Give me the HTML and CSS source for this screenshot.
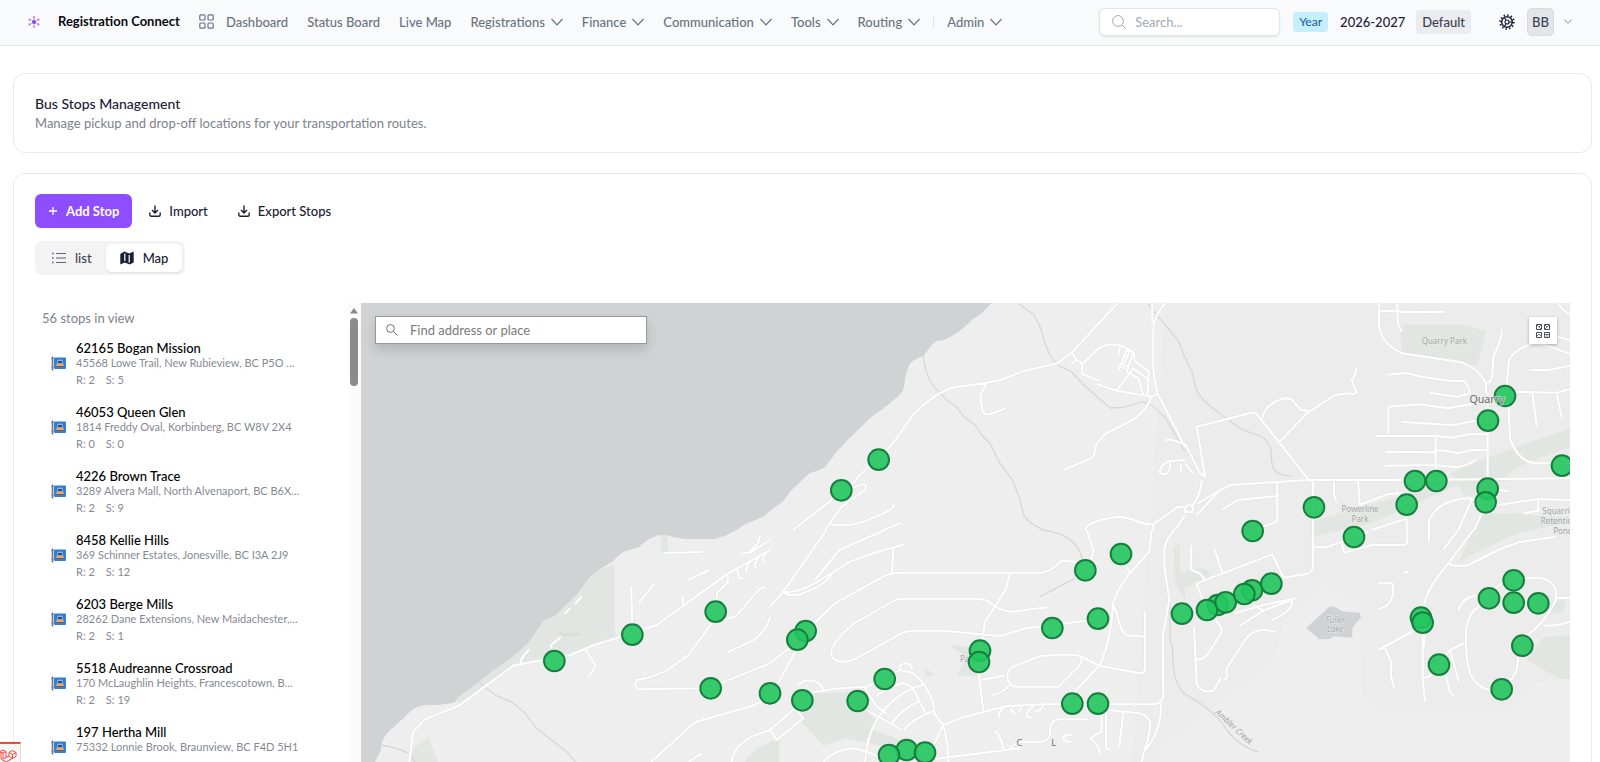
FILE: index.html
```html
<!DOCTYPE html>
<html lang="en">
<head>
<meta charset="utf-8">
<title>Bus Stops Management</title>
<link rel="stylesheet" href="styles.css">
</head>
<body>
<svg class="defs" aria-hidden="true">
  <symbol id="chev" viewBox="0 0 12 8"><path d="M.5 1 6 6.800 11.500 1" fill="none" stroke="currentColor" stroke-width="1.200"/></symbol>
  <symbol id="download" viewBox="0 0 12 12"><path d="M6 .5v7M3 5l3 3 3-3M.8 7.500v2.200a1.500 1.500 0 0 0 1.500 1.500h7.400a1.500 1.500 0 0 0 1.500-1.500V7.500" fill="none" stroke="currentColor" stroke-width="1.400"/></symbol>
  <symbol id="stop" viewBox="0 0 15 15">
    <path d="M1.500.5v14" stroke="#6b6f86" stroke-width="1.600"/><path d="M0 2.500h3M0 11h3" stroke="#8a8da0"/>
    <rect x="3" y="1.500" width="12" height="11.500" rx="1" fill="#2f7fd8"/>
    <path d="M6 4.500q3-2 6 0v3H6z" fill="#8fb6dc"/><path d="M6.800 5h4.400v2H6.800z" fill="#2d4f80"/><rect x="5.500" y="7.500" width="7" height="2.500" fill="#f3a95c"/><path d="M6 10.500h6" stroke="#56616f"/>
  </symbol>
</svg>
<header class="topbar">
  <a class="brand" href="#">
    <svg class="logo" viewBox="0 0 12 12"><path d="M6 1v10M1.500 3.500l9 5M10.500 3.500l-9 5" stroke="#c9a8fb" stroke-width="1"/><g fill="#b48af8"><circle cx="6" cy="1.200" r="1.100"/><circle cx="6" cy="10.800" r="1.100"/><circle cx="1.600" cy="3.600" r="1.200"/><circle cx="10.400" cy="3.600" r="1.200"/><circle cx="1.600" cy="8.400" r="1.200"/><circle cx="10.400" cy="8.400" r="1.200"/></g><circle cx="6" cy="6" r="2" fill="#8b3df5"/></svg>
    <span>Registration Connect</span>
  </a>
  <nav class="nav">
    <a class="dash" href="#"><svg class="grid-ico" viewBox="0 0 15 15"><g fill="none" stroke="#6b7085" stroke-width="1.200"><rect x=".8" y=".8" width="5.200" height="5.200" rx="1"/><rect x="9" y=".8" width="5.200" height="5.200" rx="1"/><rect x=".8" y="9" width="5.200" height="5.200" rx="1"/><rect x="9" y="9" width="5.200" height="5.200" rx="1"/></g></svg>Dashboard</a>
    <a href="#">Status Board</a>
    <a href="#">Live Map</a>
    <button>Registrations<svg class="chev"><use href="#chev"/></svg></button>
    <button>Finance<svg class="chev"><use href="#chev"/></svg></button>
    <button>Communication<svg class="chev"><use href="#chev"/></svg></button>
    <button>Tools<svg class="chev"><use href="#chev"/></svg></button>
    <button>Routing<svg class="chev"><use href="#chev"/></svg></button>
    <span class="divider"></span>
    <button>Admin<svg class="chev"><use href="#chev"/></svg></button>
  </nav>
  <div class="tools">
    <label class="search"><svg viewBox="0 0 14 14"><circle cx="6" cy="6" r="5.400"/><path d="m10 10 3.700 3.700"/></svg><input type="search" placeholder="Search..." aria-label="Search"></label>
    <span class="year">Year</span>
    <span class="years">2026-2027</span>
    <span class="default">Default</span>
    <button class="gear" aria-label="Settings"><svg viewBox="0 0 16 16"><g fill="none" stroke="#1b2036"><circle cx="8" cy="8" r="5.300" stroke-width="1.500"/><circle cx="8" cy="8" r="6.900" stroke-width="1.800" stroke-dasharray="1.450 2.163"/><circle cx="8" cy="8" r="2" stroke-width="1.200"/><path d="M10 8h3M7 6.300 5.500 3.700M7 9.700l-1.500 2.600" stroke-width="1.200"/></g></svg></button>
    <button class="avatar">BB</button>
    <svg class="chev small"><use href="#chev"/></svg>
  </div>
</header>
<main class="page">
  <section class="card heading">
    <h1>Bus Stops Management</h1>
    <p>Manage pickup and drop-off locations for your transportation routes.</p>
  </section>
  <section class="card body">
    <div class="actions">
      <button class="primary"><svg viewBox="0 0 10 10"><path d="M5 1v8M1 5h8" stroke="#fff" stroke-width="1.300"/></svg>Add Stop</button>
      <button class="plain"><svg><use href="#download"/></svg>Import</button>
      <button class="plain"><svg><use href="#download"/></svg>Export Stops</button>
    </div>
    <div class="toggle">
      <button><svg viewBox="0 0 14 12"><path d="M4 1.500h10M4 6h10M4 10.500h10" stroke="#5f6478" stroke-width="1.100"/><path d="M0 1.500h1.600M0 6h1.600M0 10.500h1.600" stroke="#5f6478" stroke-width="1.500"/></svg>list</button>
      <button class="on"><svg viewBox="0 0 14 14"><path d="M.3 3 4.300.6l5 2L13.700.4v11L9.700 13.500l-5-2L.3 13.600z" fill="#1b2036"/><path d="M4.800 2.600v7.500M9.200 4v7.500" stroke="#fff" stroke-width="1.200"/></svg>Map</button>
    </div>
    <div class="split">
      <div class="panel">
        <div class="list">
          <p class="count">56 stops in view</p>
          <article class="stop"><svg><use href="#stop"/></svg><div><h2>62165 Bogan Mission</h2><p>45568 Lowe Trail, New Rubieview, BC P5O …</p><p class="rs"><span>R: 2</span><span>S: 5</span></p></div></article>
          <article class="stop"><svg><use href="#stop"/></svg><div><h2>46053 Queen Glen</h2><p>1814 Freddy Oval, Korbinberg, BC W8V 2X4</p><p class="rs"><span>R: 0</span><span>S: 0</span></p></div></article>
          <article class="stop"><svg><use href="#stop"/></svg><div><h2>4226 Brown Trace</h2><p>3289 Alvera Mall, North Alvenaport, BC B6X…</p><p class="rs"><span>R: 2</span><span>S: 9</span></p></div></article>
          <article class="stop"><svg><use href="#stop"/></svg><div><h2>8458 Kellie Hills</h2><p>369 Schinner Estates, Jonesville, BC I3A 2J9</p><p class="rs"><span>R: 2</span><span>S: 12</span></p></div></article>
          <article class="stop"><svg><use href="#stop"/></svg><div><h2>6203 Berge Mills</h2><p>28262 Dane Extensions, New Maidachester,…</p><p class="rs"><span>R: 2</span><span>S: 1</span></p></div></article>
          <article class="stop"><svg><use href="#stop"/></svg><div><h2>5518 Audreanne Crossroad</h2><p>170 McLaughlin Heights, Francescotown, B…</p><p class="rs"><span>R: 2</span><span>S: 19</span></p></div></article>
          <article class="stop"><svg><use href="#stop"/></svg><div><h2>197 Hertha Mill</h2><p>75332 Lonnie Brook, Braunview, BC F4D 5H1</p></div></article>
        </div>
        <div class="scroll"><svg viewBox="0 0 8 6"><path d="M4 0 8 5.500H0z" fill="#888"/></svg><span></span></div>
      </div>
      <div class="map">
        <svg class="canvas" viewBox="0 0 3627 1536" preserveAspectRatio="xMinYMin slice">
          <path fill="#ececec" d="M2415 0H3627V1120L3530 1140 3450 1226H3060L3005 1170 2990 900 2890 845 2772 950 2740 1060 2660 1140 2400 1330 2380 1536H2300Z"/>
          <path fill="#cfd3d4" d="M0 0H1892L1862 31 1832 51Q1797 90 1747 112L1727 113 1712 126 1687 159Q1645 170 1639 201 1630 225 1631 241 1628 262 1619 273L1577 309 1527 346 1475 396 1425 448Q1400 485 1387 496 1370 504 1345 511L1287 566 1265 596 1227 623 1207 641 1167 658Q1145 665 1127 681L1097 696 1062 708H972Q940 705 922 697L892 697 862 709 832 733 787 746 747 781Q700 805 672 841L647 876 582 939 547 953Q520 1000 502 1021L462 1056 392 1106 342 1151 277 1199 232 1206Q190 1203 172 1211 150 1220 132 1241L82 1286Q60 1310 60 1341L42 1377 20 1450 0 1480Z"/>
          <g fill="#e2e6e2">
            <g transform="translate(-18 681)"><path d="M778 103 735 117 690 160 665 195 600 258 565 272 520 340 480 375 410 425 305 505 315 520 480 405 600 385 780 320Z"/><path d="M918 16h20v50h-20zM175 655 220 622 250 700H165ZM1170 696Q1185 660 1245 637V700Z"/></g>
            <g transform="translate(1227 681)"><path d="M130 490 285 485 290 545 320 570 310 600 420 640 380 660 230 625 160 648 90 570ZM535 345 600 352 625 437H560L590 380ZM466 412l30 26h-30zM0 633h28v70H0ZM1210 50 1230 42V125L1245 130V210L1215 160Z"/></g>
            <g transform="translate(2472 -9)"><path d="M645 85 655 75 840 74 903 93 876 197 650 158ZM1155 385 900 475 795 520 810 540 640 590 380 665V710L560 670 820 555 840 590 900 580 1000 500 1155 440ZM885 640 980 640 1155 655V665L1000 700 870 760 820 790Z"/></g>
            <g transform="translate(2472 681)"><path d="M0 123 45 110 75 125 65 150 0 175ZM1075 322 1155 315V447H1125L1025 390ZM1110 205h28v40l-50 10zM385 0 450 0 385 20z"/></g>
          </g>
          <path fill="#cfd3d4" d="M2836 975 2907 909 2920 911 2945 925 2995 929 3000 942 2974 975V1002L2965 1004 2920 1000 2903 1009H2875Z"/>
          <g class="creek">
            <path transform="translate(-18 681)" d="M78 645Q120 650 160 670L180 696M372 455 392 472 420 495 472 517 510 550 545 595 640 670 665 700"/>
            <path transform="translate(1227 -9)" d="M460 168 466 205Q475 240 492 260L530 300 560 322 582 350 618 378 635 405 660 430 690 490 728 542 747 590 762 648Q780 672 820 690M745 10 792 45 812 85 825 130 838 162 862 195 903 215 945 258 1020 324 1060 322 1120 305 1150 318 1187 355 1245 455M1133 10 1165 50 1225 122 1245 175"/>
            <path transform="translate(1227 681)" d="M815 0Q920 10 938 90M915 145 810 200M1200 210V330L1208 350Q1205 460 1245 493"/>
            <path transform="translate(2472 -9)" d="M0 170 22 220 32 265Q45 300 110 345L170 388 225 408Q255 425 258 450 258 500 270 512 290 530 322 527"/>
            <path transform="translate(2472 681)" d="M0 493Q90 540 125 600 170 655 222 666"/>
          </g>
          <defs><g id="roads">
            <g transform="translate(-18 681)">
              <path d="M163 696 173 607 210 568 312 527 475 407 535 395 640 378 718 345 800 320 905 285 1115 133 1245 60M497 400 500 385 522 358M590 355 588 345 618 320M693 360 722 408 702 437M832 290 829 172M852 217 900 160M985 225 982 195M1000 150 1062 120M1117 135Q1122 150 1115 160L1085 190V220M1070 280 1000 375 940 418Q890 445 845 450 835 465 848 478L1060 475 1245 400M1100 270 1140 260Q1170 230 1210 180L1230 170M1245 260Q1235 300 1200 328L1118 367M888 696 1020 577 1190 528 1240 505M1130 696Q1135 650 1190 620L1245 600M1000 696 1040 670M930 69 1040 66M1162 70 1185 68 1245 30M1180 68 1210 40 1215 15M1148 110Q1145 150 1165 145M1188 90Q1165 125 1178 130M1215 75Q1190 110 1205 115M1235 65Q1215 90 1230 97M660 222 680 200M628 252 645 235"/>
            </g>
            <g transform="translate(1227 -9)">
              <path d="M70 690 245 552 280 515 365 435 430 343Q480 290 542 264L650 248 690 240 765 212 862 190 905 158 1042 10M905 158 920 180 938 192M920 180 902 195M650 248 632 285V300L638 335Q645 345 660 342L705 326M165 690 215 620 285 570Q295 552 275 553L245 565M180 672Q250 685 310 652 365 635 375 610M340 690 395 668M938 192 985 145Q1020 125 1060 140L1093 158V182L1137 215 1132 285M938 192Q930 225 945 225L988 243M980 252 1040 272 1145 290 1163 280M1040 272 1090 205 1137 240M1045 210 1070 150 1090 158 1070 215 1105 235 1120 285M1050 200 1065 205M1080 150 1060 195 1075 198 1090 160M1045 165 1050 140M1147 10V70M1185 10Q1150 50 1150 90V205Q1155 260 1165 285L1245 440M1143 290Q1140 320 1088 360L1005 402 980 430 970 472 882 510M1187 425Q1190 415 1205 420L1245 432M1245 480 1195 484Q1165 500 1170 520 1195 530 1200 500V484M1232 520V495M945 690Q955 660 1050 650L1085 657Q1120 675 1150 672L1225 620 1245 622M1150 672V690M1215 690 1245 645"/>
            </g>
            <g transform="translate(1227 681)">
              <path d="M170 0 40 185 0 230M345 0 208 60 135 150M38 185Q50 200 90 193 170 165 188 128M38 185Q80 190 135 160L240 95 300 73 405 43M370 55 366 130M0 400 50 360 195 220 345 137Q365 128 390 128H815Q830 125 845 118L875 92 920 95M720 130 708 178 645 275 637 330M830 232 730 245Q705 245 680 232L650 212Q640 206 620 206H400Q380 206 370 213L250 282Q175 345 185 378 200 405 250 390L400 307Q420 302 440 302L520 302 690 318 770 295 1020 263M75 365 25 460M1030 220Q1025 290 1010 350L990 405 900 500M950 0 970 60 965 90M1145 0 1138 65 1075 135 1045 180 1027 225Q1040 240 1045 270L1055 300 1070 316 1125 320V245M1125 320V415Q1125 430 1110 430L990 408 930 378Q900 370 810 378L730 410Q710 420 712 445 720 470 740 470H865Q875 465 880 455L930 405Q940 390 930 378M630 450 705 437M718 465Q700 490 665 495M625 420 640 540M1065 100 1080 130M470 690 520 585 570 565 710 528 830 523H1150Q1175 520 1180 500L1178 320 1198 210 1183 110V60Q1185 30 1213 0M1172 520Q1178 600 1122 665L1115 696M0 600 20 630 100 565 75 535 0 600M85 465Q110 440 145 458 160 470 160 485M130 487Q180 475 290 470L345 445 390 420 430 430Q470 460 490 520L495 555 520 585Q535 640 535 696M388 420Q385 400 410 400 430 405 425 420M283 470 320 530 350 550M290 540 395 600M285 696Q290 620 320 570L350 530Q400 480 465 462M365 580Q400 535 445 515M400 600Q430 565 490 543M395 460Q430 460 445 510L468 550M320 497 345 480 395 460M160 696Q190 660 250 655L290 665 325 680M500 686 750 655M675 603Q690 610 700 657M690 565Q680 550 700 535M720 535 735 552M755 530 745 550M790 530Q770 540 770 560L790 565M820 525Q815 540 795 545M722 655Q735 635 760 635H815Q835 635 840 610 840 570 865 568H955M1060 545 1048 650M995 535V605L960 625 985 650 990 675M1008 540V655L1020 660M1015 540 1110 550Q1140 560 1140 580 1140 620 1122 665M905 615Q880 610 880 630 900 640 905 635"/>
            </g>
            <g transform="translate(2472 -9)">
              <path d="M582 10V80Q590 130 650 160L830 187Q880 205 903 250V280M637 10 638 70 650 95M582 33H640L655 37 780 35M952 88Q950 120 925 170L922 225Q920 245 903 250M1120 10Q1130 30 1155 43M965 260 972 180Q985 155 1020 140 1050 120 1110 145L1155 162M1100 105 1155 120M1033 210H1090L1155 197M607 224 665 219 710 230 800 243H838Q850 255 855 280M733 278 815 290 860 278M610 403V320L700 313 790 325 860 312M651 366 805 376 880 360M573 408H752L800 413 850 403H910M602 455 750 457V450L780 452 820 460 860 450H910M600 497 750 495 815 502Q850 495 875 478M752 412V520M908 280V530M970 300 975 415Q1000 490 1060 490H1155M990 275 1115 278 1155 267M1042 278 1055 378M1115 278 1130 353M35 645 105 570 138 555 370 540H690L1155 535M0 430 45 520 60 530 35 380 200 338H212L370 538 384 545V690M232 355Q240 310 300 295L320 298 348 330 370 332M285 425 365 340 450 285 490 280Q515 285 514 275L500 240Q515 225 512 202M0 490 25 520M50 540Q50 580 20 620M0 640Q0 615 12 613 30 620 22 635 5 640 0 630M35 612 105 570M112 628 158 600 277 588M277 547V665L205 690M447 545V585L455 608M519 542 524 615 610 582 650 580M665 650V690M665 655 560 690M732 690V660Q760 600 850 595L940 615 1060 597 1155 600M1060 597V632L1015 640M940 570 970 573M860 600 820 690M890 640 868 690"/>
            </g>
            <g transform="translate(2472 681)">
              <path d="M384 0V110Q380 130 365 132L295 143 262 73 35 160 60 230 107 290Q115 300 105 315L70 370Q60 388 30 390M20 45Q15 120 20 120L45 130 60 150M88 57 112 127M27 290 35 460Q45 490 85 483L107 445M275 307Q210 285 180 330L125 415V445L115 450M165 287 235 242 205 225M150 250 235 225 333 205M235 242 320 210Q330 240 260 270M384 52H425L550 5M470 40 478 68 560 45H655Q667 45 667 30V0M732 0V35M820 0 775 58M865 0 790 100Q730 170 718 220V350M790 100Q810 112 850 105L940 60 1000 37 1110 20M580 160H622Q635 220 580 238M820 240Q840 195 875 198M718 285 580 360M598 350 618 395Q615 440 628 475M713 310V445L720 515M715 445 740 435 795 360 840 338M780 430 795 485 807 498M795 360 822 455M915 480Q870 470 855 430 840 380 843 300 850 250 880 230 940 140 1020 143H1060Q1110 150 1113 190V210Q1080 280 1020 320M1113 205 1155 203M1075 285Q1100 292 1155 275M1000 380 995 420 975 455M657 130 670 124"/>
            </g>
          </g></defs>
          <use href="#roads" class="casing"/>
          <use href="#roads" class="road"/>
          <g class="maplabel">
            <text x="3250" y="116">Quarry Park</text>
            <text x="2997" y="622">Powerline</text><text x="2997" y="652">Park</text>
            <text x="2924" y="953" class="lake">Fuller</text><text x="2922" y="982" class="lake">Lake</text>
            <text x="3592" y="628">Squarrie</text><text x="3594" y="657">Retention</text><text x="3606" y="688">Pond</text>
            <text x="1822" y="1070">Park</text>
            <text class="lake" transform="translate(2618 1273) rotate(43)">Ambler Creek</text>
            <text x="625" y="996" class="faint">Trailside</text>
          </g>
          <g class="marks">
            <g transform="translate(-18 681)"><circle cx="598" cy="393" r="31"/><circle cx="832" cy="314" r="31"/><circle cx="1082" cy="245" r="31"/><circle cx="1067" cy="475" r="31"/><circle cx="1245" cy="490" r="31"/></g>
            <g transform="translate(1227 -9)"><circle cx="326" cy="479" r="31"/><circle cx="214" cy="571" r="31"/></g>
            <g transform="translate(1227 681)"><circle cx="107" cy="303" r="31"/><circle cx="82" cy="329" r="31"/><circle cx="97" cy="511" r="31"/><circle cx="263" cy="513" r="31"/><circle cx="344" cy="447" r="31"/><circle cx="410" cy="660" r="31"/><circle cx="357" cy="675" r="31"/><circle cx="465" cy="668" r="31"/><circle cx="630" cy="362" r="31"/><circle cx="627" cy="396" r="31"/><circle cx="847" cy="294" r="31"/><circle cx="984" cy="266" r="31"/><circle cx="946" cy="121" r="31"/><circle cx="1053" cy="72" r="31"/><circle cx="907" cy="521" r="31"/><circle cx="984" cy="521" r="31"/><circle cx="1236" cy="251" r="31"/></g>
            <g transform="translate(2472 -9)"><circle cx="960" cy="288" r="31"/><circle cx="909" cy="362" r="31"/><circle cx="690" cy="543" r="31"/><circle cx="754" cy="543" r="31"/><circle cx="665" cy="614" r="31"/><circle cx="908" cy="566" r="31"/><circle cx="902" cy="607" r="31"/><circle cx="1131" cy="497" r="31"/><circle cx="387" cy="622" r="31"/><circle cx="203" cy="693" r="31"/><circle cx="507" cy="711" r="31"/></g>
            <g transform="translate(2472 681)"><circle cx="98" cy="225" r="31"/><circle cx="66" cy="240" r="31"/><circle cx="122" cy="217" r="31"/><circle cx="201" cy="181" r="31"/><circle cx="178" cy="192" r="31"/><circle cx="259" cy="161" r="31"/><circle cx="708" cy="263" r="31"/><circle cx="713" cy="278" r="31"/><circle cx="912" cy="205" r="31"/><circle cx="986" cy="151" r="31"/><circle cx="986" cy="218" r="31"/><circle cx="1060" cy="220" r="31"/><circle cx="1012" cy="347" r="31"/><circle cx="762" cy="404" r="31"/><circle cx="950" cy="478" r="31"/></g>
          </g>
          <g class="maplabel"><text class="town" x="3378" y="292">Quarry</text><text class="letter" x="1975" y="1322">C</text><text class="letter" x="2078" y="1322">L</text></g>
        </svg>
        <label class="find"><svg viewBox="0 0 12 12"><circle cx="4.500" cy="4.500" r="3.900"/><path d="m7.400 7.400 4.100 4.100"/></svg><input type="text" placeholder="Find address or place" aria-label="Find address or place"></label>
        <button class="basemap" aria-label="Basemaps"><svg viewBox="0 0 14 14"><g fill="none" stroke="#4a4f5c"><path d="M.5.5h5v5h-5zM8.500.5h5v5h-5zM.5 8.500h5v5h-5zM8.500 8.500h5v5h-5z"/><path d="m1 1 4 4M3 3l2-2M9 1l2 2 2-2M9 5l2-2M1 12l2-2 2 2M9 10.500h4M11 10v3" stroke-width=".8"/></g></svg></button>
      </div>
    </div>
  </section>
</main>
<button class="debug" aria-label="Open debug bar"><svg viewBox="0 0 17 16"><path d="M0 3.500 3 2l3 1.500v6L9 8V4.500L12.500 2.500 16 4.500v4l-3.500 2-3.500-2M9 4.500l3.500 2 3.500-2M12.500 6.500v4L6 14 1 11V5L0 4.500M6 3.500 3 5 .5 4M3 5v6l3-1.500" fill="none" stroke="#f0493e" stroke-width="1"/></svg></button>
</body>
</html>
```

FILE: styles.css
```css
* { box-sizing: border-box; margin: 0; }
body { height: 100vh; overflow: hidden; background: #fff; color: #1b2036; font: 13px/18px Lato, "Open Sans", sans-serif; }
button, input { font: inherit; color: inherit; }
button { border: 0; background: none; padding: 0; cursor: pointer; }
a { color: inherit; text-decoration: none; }
svg { display: block; flex: none; }
.defs { position: absolute; width: 0; height: 0; }

.topbar { display: flex; align-items: center; height: 46px; padding: 0 28px 2px; background: #f9fafc; border-bottom: 1px solid #e6e7eb; white-space: nowrap; }
.brand { display: flex; align-items: center; gap: 18px; width: 171px; color: #0b0b12; font-weight: 700; }
.brand span { padding-bottom: 2px; }
.logo { width: 12px; height: 12px; }
.nav { display: flex; align-items: center; gap: 19px; color: #6b7280; font-weight: 500; }
.nav a, .nav button { display: flex; align-items: center; }
.nav button { gap: 6px; }
.nav .dash { gap: 12px; }
.grid-ico { width: 15px; height: 15px; }
.chev { width: 12px; height: 8px; color: #6b7085; }
.divider { width: 1px; height: 14px; background: #e3e5e9; margin: 0 -6px; }
.tools { display: flex; align-items: center; margin-left: auto; }
.search { display: flex; align-items: center; gap: 9px; width: 181px; height: 28px; padding: 0 12px; background: #fff; border: 1px solid #e3e5ea; border-radius: 6px; box-shadow: 0 1px 2px #0000001a; }
.search svg { width: 14px; height: 14px; fill: none; stroke: #a3a8b3; }
.search input, .find input { flex: 1; min-width: 0; border: 0; padding: 0; background: none; outline: 0; }
.search input::placeholder { color: #a3a8b3; }
.year { margin-left: 13px; padding: 1px 6px; background: #c5effe; color: #2362a5; border-radius: 4px; font-size: 12px; font-weight: 500; }
.years { margin-left: 12px; font-weight: 500; }
.default { margin-left: 11px; padding: 3px 6px; background: #ebecef; border-radius: 4px; color: #3b4152; font-weight: 500; }
.gear { margin-left: 28px; }
.gear svg { width: 16px; height: 16px; }
.avatar { width: 27px; height: 28px; margin-left: 12px; background: #e3e5e9; border: 1px solid #d8dade; border-radius: 5px; color: #3b4152; font-weight: 500; }
.chev.small { width: 8px; height: 5px; margin-left: 10px; }

.page { padding: 27px 8px 0 13px; }
.card { padding: 20px 21px; border: 1px solid #e9eaee; border-radius: 12px; }
.heading { height: 80px; margin-bottom: 20px; }
.heading h1 { font-size: 14px; line-height: 20px; font-weight: 500; }
.heading p { color: #7d828c; }
.actions { display: flex; gap: 4px; }
.actions button { display: flex; align-items: center; gap: 8px; height: 34px; padding: 0 13px; font-weight: 500; }
.actions .primary { background: #8e4dff; color: #fff; border-radius: 6px; font-weight: 700; }
.primary svg { width: 10px; height: 10px; }
.plain svg { width: 12px; height: 12px; }
.toggle { display: flex; width: fit-content; margin-top: 13px; padding: 3px; background: #f3f3f4; border-radius: 7px; }
.toggle button { display: flex; align-items: center; gap: 9px; height: 28px; padding: 0 14px; border-radius: 6px; font-weight: 500; color: #3b4152; }
.toggle .on { background: #fff; box-shadow: 0 1px 2px #00000014; color: #1b2036; }
.toggle svg { width: 14px; height: 14px; }

.split { display: flex; height: 512px; margin-top: 28px; }
.panel { display: flex; width: 326px; flex: none; overflow: hidden; }
.list { flex: 1; padding: 6px 7px; }
.count { color: #7d828c; }
.stop { display: flex; align-items: flex-start; gap: 10px; height: 64px; padding: 8px 9px; }
.count + .stop { margin-top: 5px; }
.stop svg { width: 15px; height: 15px; margin-top: 16px; }
.stop h2 { font-size: 13px; line-height: 16px; font-weight: 500; color: #000; }
.stop p { min-height: 16px; font-size: 11px; line-height: 14px; color: #858a92; white-space: nowrap; }
.stop .rs { display: flex; gap: 11px; line-height: 16px; }
.scroll { width: 13px; padding: 5px 0 0 2px; background: #fbfbfb; }
.scroll svg { width: 8px; height: 6px; }
.scroll span { display: block; width: 8px; height: 68px; margin-top: 4px; border-radius: 4px; background: #8b8b8b; }

.map { position: relative; flex: 1; overflow: hidden; background: #eee; }
.canvas { width: 100%; height: 100%; }
.creek { fill: none; stroke: #d6d8d8; stroke-width: 4; }
.casing { fill: none; stroke: #e4e4e4; stroke-width: 9; stroke-linejoin: round; }
.road { fill: none; stroke: #fff; stroke-width: 6; stroke-linejoin: round; }
.maplabel { fill: #a2a6a4; font: 24px "Noto Sans", sans-serif; text-anchor: middle; dominant-baseline: middle; paint-order: stroke; stroke: #ececec; stroke-width: 3px; }
.maplabel .lake { font-style: italic; }
.maplabel .faint { fill: #d4d7d4; font-size: 16px; stroke: none; }
.maplabel .town { fill: #6d6d6d; font-size: 32px; }
.maplabel .letter { fill: #777; font-size: 28px; }
.marks { fill: #22c55e; fill-opacity: .9; stroke: #15803d; stroke-width: 6; }
.find { position: absolute; left: 14px; top: 13px; display: flex; align-items: center; gap: 12px; width: 272px; height: 28px; padding: 0 10px; background: #fff; border: 1px solid #949a99; box-shadow: 0 6px 12px #00000024; }
.find svg { width: 12px; height: 12px; fill: none; stroke: #6f6f6f; }
.find input::placeholder { color: #7b7b7b; }
.basemap { position: absolute; right: 13px; top: 14px; width: 28px; height: 27px; padding: 6px 7px; background: #fff; box-shadow: 0 1px 3px #0000004d; }
.basemap svg { width: 14px; height: 14px; }
.debug { position: fixed; left: 0; bottom: 0; width: 21px; height: 20px; background: #f6f6f6; border-top: 2px solid #f0493e; border-right: 1px solid #ddd; overflow: hidden; }
.debug svg { width: 17px; height: 16px; margin-top: 4px; }
```
